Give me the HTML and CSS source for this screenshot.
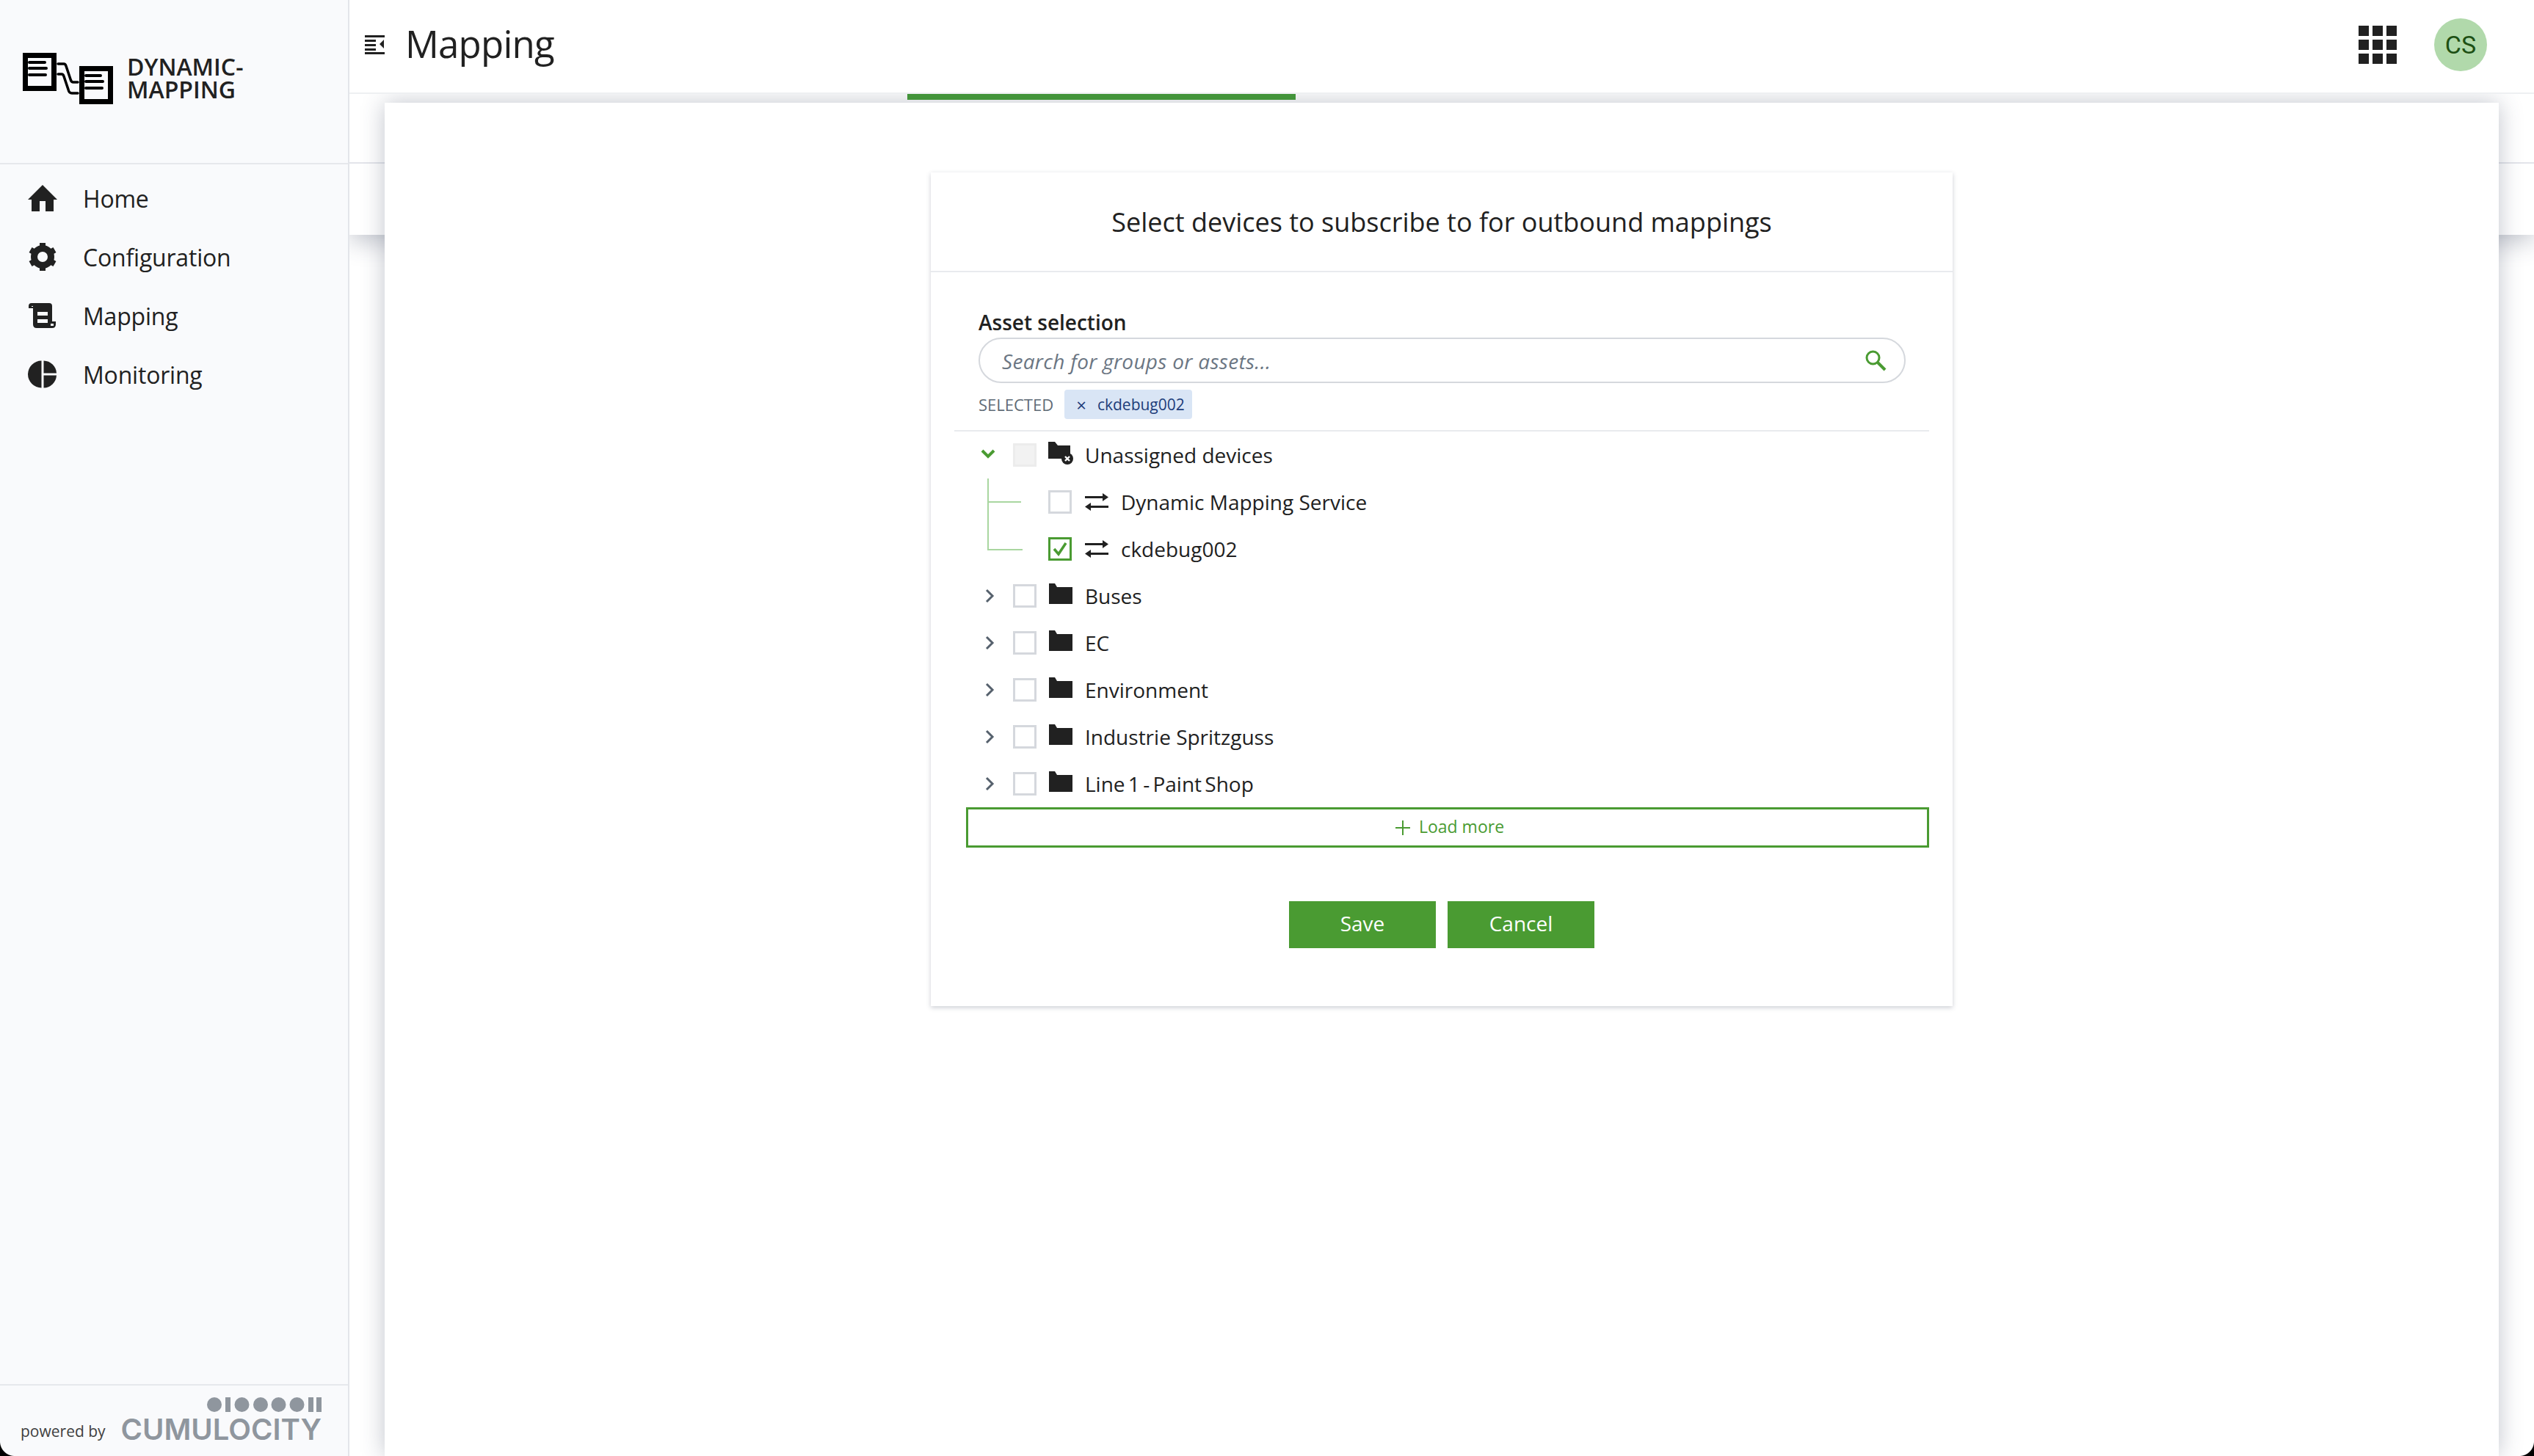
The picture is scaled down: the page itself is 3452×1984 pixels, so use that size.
FILE: index.html
```html
<!DOCTYPE html>
<html lang="en">
<head>
    <meta charset="UTF-8">
    <title>Mapping</title>
    <link rel="stylesheet" href="styles.css">
</head>
<body>
    <div class="app">
        <aside class="sidebar">
            <div class="brand">
                <svg class="brand-logo" viewBox="0 0 123 70" width="123" height="70">
                    <path fill-rule="evenodd" d="M0 0H46V52H0ZM7 7V45H39V7Z"/>
                    <path fill-rule="evenodd" d="M77 18H123V70H77ZM84 25V63H116V25Z"/>
                    <path class="logo-line" d="M9 13H30M9 21H32M9 30H31M86 31H106M86 39H109M86 48H108"/>
                    <path class="logo-line thin" d="M48 15H56Q58 15 59 18L65 36Q66 40 69 40H75M48 29H53Q55 29 56 32L62 50Q63 55 67 55H75"/>
                </svg>
                <div class="brand-name">DYNAMIC-<br>MAPPING</div>
            </div>
            <nav class="nav">
                <a class="nav-item">
                    <svg class="nav-icon" viewBox="0 0 40 40"><path d="M20 2L40 22H35V38H24V24H16V38H5V22H0Z"/></svg>
                    Home
                </a>
                <a class="nav-item">
                    <svg class="nav-icon" viewBox="0 0 40 40">
                        <circle cx="20" cy="20" r="11.5" fill="none" stroke="#212121" stroke-width="9"/>
                        <g>
                            <rect x="16" y="1" width="8" height="8"/>
                            <rect x="16" y="31" width="8" height="8"/>
                            <rect x="16" y="1" width="8" height="8" transform="rotate(60 20 20)"/>
                            <rect x="16" y="31" width="8" height="8" transform="rotate(60 20 20)"/>
                            <rect x="16" y="1" width="8" height="8" transform="rotate(120 20 20)"/>
                            <rect x="16" y="31" width="8" height="8" transform="rotate(120 20 20)"/>
                        </g>
                    </svg>
                    Configuration
                </a>
                <a class="nav-item">
                    <svg class="nav-icon" viewBox="0 0 40 40">
                        <path fill-rule="evenodd" d="M5 3H29Q33 3 33 7V28H38V32Q38 37 33 37H12Q7 37 7 32V10H1V7Q1 3 5 3ZM13 15V20H27V15ZM13 25V30H27V25ZM31 31V34H35V31ZM5 7V8H7V7Z"/>
                    </svg>
                    Mapping
                </a>
                <a class="nav-item">
                    <svg class="nav-icon" viewBox="0 0 40 40">
                        <path d="M18.5 1.5V38.5A18.5 18.5 0 0 1 18.5 1.5Z"/>
                        <path d="M21.5 1.5A18 18 0 0 1 39 18.5H21.5Z"/>
                        <path d="M21.5 21.5H39A18 18 0 0 1 21.5 38.5Z"/>
                    </svg>
                    Monitoring
                </a>
            </nav>
            <div class="powered">
                <span class="powered-by">powered by</span>
                <div class="c8y">
                    <svg class="c8y-dots" viewBox="0 0 156 20" width="156" height="20">
                        <circle cx="10" cy="10" r="10"/><rect x="25" y="0" width="7" height="20"/>
                        <circle cx="47.5" cy="10" r="10"/><circle cx="73" cy="10" r="10"/>
                        <circle cx="97.5" cy="10" r="10"/><circle cx="122.5" cy="10" r="10"/>
                        <rect x="138" y="0" width="7" height="20"/><rect x="149" y="0" width="7" height="20"/>
                    </svg>
                    <div class="c8y-name">CUMULOCITY</div>
                </div>
            </div>
        </aside>

        <main class="main">
            <header class="topbar">
                <svg class="toggle" viewBox="0 0 28 28" width="28" height="28">
                    <path d="M1 2H28V5H1ZM1 8H16V11H1ZM1 14H16V17H1ZM1 20H16V23H1ZM1 25H28V28H1ZM27 8V20L21 14Z"/>
                </svg>
                <h1 class="page-title">Mapping</h1>
                <div class="topbar-right">
                    <div class="app-grid">
                        <i></i><i></i><i></i><i></i><i></i><i></i><i></i><i></i><i></i>
                    </div>
                    <div class="avatar">CS</div>
                </div>
            </header>
            <div class="tabstrip">
                <div class="tabstrip-top"></div>
                <div class="tabstrip-bottom"></div>
            </div>
            <div class="progress"></div>

            <div class="modal">
                <div class="card">
                    <h2 class="card-title">Select devices to subscribe to for outbound mappings</h2>
                    <div class="card-body">
                        <div class="search-block">
                            <label class="field-label">Asset selection</label>
                            <div class="search">
                                <span class="search-text">Search for groups or assets...</span>
                                <svg class="search-icon" viewBox="0 0 30 30" width="30" height="30">
                                    <circle cx="11.5" cy="11.5" r="8.5" fill="none" stroke="#4a9b32" stroke-width="3"/>
                                    <path d="M18 18L28 28" stroke="#4a9b32" stroke-width="4"/>
                                </svg>
                            </div>
                            <div class="selected">
                                <span class="selected-label">SELECTED</span>
                                <span class="tag"><span class="tag-x">&times;</span>ckdebug002</span>
                            </div>
                        </div>

                        <div class="tree">
                            <div class="row">
                                <svg class="chev open" viewBox="0 0 20 14" width="20" height="14"><path d="M2 3L10 11L18 3"/></svg>
                                <span class="check disabled"></span>
                                <svg class="folder" viewBox="0 0 34 32" width="34" height="32">
                                    <path d="M0 1H9L13 6H30V20A11 11 0 0 0 19 24H0Z"/>
                                    <circle cx="26" cy="24" r="8"/>
                                    <path d="M23 21L29 27M29 21L23 27" stroke="#fff" stroke-width="2.4"/>
                                </svg>
                                <span class="row-text">Unassigned devices</span>
                            </div>
                            <div class="children">
                                <div class="row child">
                                    <span class="check"></span>
                                    <svg class="swap" viewBox="0 0 32 30" width="32" height="30"><path d="M0 7H24V3L32 8.5L24 14V10H0ZM32 20H8V16L0 21.5L8 27V23H32Z"/></svg>
                                    <span class="row-text">Dynamic Mapping Service</span>
                                </div>
                                <div class="row child">
                                    <span class="check checked">
                                        <svg viewBox="0 0 24 24" width="24" height="24"><path d="M4 12L10 19L20 4" fill="none" stroke="#4a9b32" stroke-width="3.5"/></svg>
                                    </span>
                                    <svg class="swap" viewBox="0 0 32 30" width="32" height="30"><path d="M0 7H24V3L32 8.5L24 14V10H0ZM32 20H8V16L0 21.5L8 27V23H32Z"/></svg>
                                    <span class="row-text">ckdebug002</span>
                                </div>
                            </div>
                            <div class="row">
                                <svg class="chev" viewBox="0 0 14 20" width="14" height="20"><path d="M3 2L11 10L3 18"/></svg>
                                <span class="check"></span>
                                <svg class="folder" viewBox="0 0 34 32" width="34" height="32"><path d="M1 2H9L12 7H33V30H1Z"/></svg>
                                <span class="row-text">Buses</span>
                            </div>
                            <div class="row">
                                <svg class="chev" viewBox="0 0 14 20" width="14" height="20"><path d="M3 2L11 10L3 18"/></svg>
                                <span class="check"></span>
                                <svg class="folder" viewBox="0 0 34 32" width="34" height="32"><path d="M1 2H9L12 7H33V30H1Z"/></svg>
                                <span class="row-text">EC</span>
                            </div>
                            <div class="row">
                                <svg class="chev" viewBox="0 0 14 20" width="14" height="20"><path d="M3 2L11 10L3 18"/></svg>
                                <span class="check"></span>
                                <svg class="folder" viewBox="0 0 34 32" width="34" height="32"><path d="M1 2H9L12 7H33V30H1Z"/></svg>
                                <span class="row-text">Environment</span>
                            </div>
                            <div class="row">
                                <svg class="chev" viewBox="0 0 14 20" width="14" height="20"><path d="M3 2L11 10L3 18"/></svg>
                                <span class="check"></span>
                                <svg class="folder" viewBox="0 0 34 32" width="34" height="32"><path d="M1 2H9L12 7H33V30H1Z"/></svg>
                                <span class="row-text">Industrie Spritzguss</span>
                            </div>
                            <div class="row">
                                <svg class="chev" viewBox="0 0 14 20" width="14" height="20"><path d="M3 2L11 10L3 18"/></svg>
                                <span class="check"></span>
                                <svg class="folder" viewBox="0 0 34 32" width="34" height="32"><path d="M1 2H9L12 7H33V30H1Z"/></svg>
                                <span class="row-text tight">Line 1 - Paint Shop</span>
                            </div>
                        </div>

                        <button class="load-more">
                            <svg viewBox="0 0 20 20" width="20" height="20"><path d="M10 0V20M0 10H20" stroke="#4a9b32" stroke-width="2"/></svg>
                            <span>Load more</span>
                        </button>
                        <div class="actions">
                            <button class="btn">Save</button>
                            <button class="btn">Cancel</button>
                        </div>
                    </div>
                </div>
            </div>
        </main>
    </div>
</body>
</html>
```

FILE: styles.css
```css
* {
    box-sizing: border-box;
}
html, body {
    height: 100%;
    margin: 0;
}
body {
    font-family: 'Open Sans', sans-serif;
    color: #212121;
    background: #fff;
    overflow: hidden;
}
.app {
    display: flex;
    height: 100%;
}

/* the window's rounded corners show at the bottom */
body::before,
body::after {
    content: "";
    position: fixed;
    z-index: 9;
    bottom: 0;
    width: 20px;
    height: 20px;
}
body::before {
    left: 0;
    background: radial-gradient(circle at 100% 0, transparent 19.5px, #000 20.5px);
}
body::after {
    right: 0;
    background: radial-gradient(circle at 0 0, transparent 19.5px, #000 20.5px);
}

/* sidebar */
.sidebar {
    width: 476px;
    flex: none;
    display: flex;
    flex-direction: column;
    background: #f9fafc;
    border-right: 2px solid #e3e5ea;
}
.brand {
    height: 224px;
    padding: 72px 0 0 31px;
    display: flex;
    align-items: flex-start;
    gap: 19px;
    border-bottom: 2px solid #e6e8ec;
}
.brand-logo {
    flex: none;
}
.logo-line {
    fill: none;
    stroke: #000;
    stroke-width: 4;
    stroke-linecap: round;
}
.logo-line.thin {
    stroke-width: 3.5;
}
.brand-name {
    font-size: 32px;
    font-weight: 600;
    line-height: 31px;
    padding-top: 3px;
}
.nav {
    flex: 1;
    padding-top: 6px;
}
.nav-item {
    height: 80px;
    display: flex;
    align-items: center;
    padding-left: 38px;
    gap: 35px;
    font-size: 32px;
    letter-spacing: -0.2px;
}
.nav-icon {
    width: 40px;
    height: 40px;
    fill: #212121;
}
.powered {
    height: 98px;
    border-top: 2px solid #e6e8ec;
    display: flex;
    align-items: flex-end;
    justify-content: space-between;
    padding: 0 36px 20px 28px;
}
.powered-by {
    font-size: 21px;
    color: #3f3f3f;
}
.c8y {
    display: flex;
    flex-direction: column;
    align-items: flex-end;
    gap: 8px;
}
.c8y-dots {
    fill: #8f969e;
}
.c8y-name {
    font-family: 'Inter', sans-serif;
    font-weight: 600;
    font-size: 40px;
    line-height: 32px;
    color: #8f969e;
}

/* header + tabs */
.main {
    flex: 1;
    position: relative;
    overflow: hidden;
}
.topbar {
    height: 128px;
    position: relative;
    z-index: 3;
    background: #fff;
    border-bottom: 2px solid #eef0f2;
    display: flex;
    align-items: center;
    padding: 0 64px 0 20px;
}
.toggle {
    fill: #212121;
    margin-bottom: 6px;
}
.page-title {
    margin: 0 0 0 28px;
    font-size: 51px;
    font-weight: 400;
    letter-spacing: -0.8px;
    line-height: 1;
    padding-bottom: 8px;
}
.topbar-right {
    margin-left: auto;
    display: flex;
    align-items: center;
    gap: 51px;
    padding-bottom: 4px;
}
.app-grid {
    display: grid;
    grid-template-columns: repeat(3, 14px);
    grid-auto-rows: 14px;
    gap: 5px;
}
.app-grid i {
    background: #212121;
}
.avatar {
    width: 72px;
    height: 72px;
    border-radius: 50%;
    background: #b1d9ab;
    color: #1d5014;
    font-family: 'Roboto', sans-serif;
    font-size: 34px;
    display: flex;
    align-items: center;
    justify-content: center;
}
.tabstrip {
    height: 192px;
    background: #fff;
    box-shadow: 0 10px 30px rgba(50, 60, 85, 0.28);
}
.tabstrip-top {
    height: 95px;
    border-bottom: 2px solid #e3e5ea;
}
.progress {
    position: absolute;
    z-index: 4;
    top: 128px;
    left: 760px;
    width: 529px;
    height: 8px;
    background: #43943a;
}

/* modal */
.modal {
    position: absolute;
    z-index: 2;
    top: 140px;
    left: 48px;
    right: 48px;
    bottom: 0;
    background: #fff;
    box-shadow: 0 0 30px rgba(50, 60, 85, 0.3);
    padding-top: 95px;
}
.card {
    width: 1392px;
    height: 1136px;
    margin: 0 auto;
    background: #fff;
    box-shadow: 0 2px 6px rgba(50, 60, 85, 0.25);
}
.card-title {
    margin: 0;
    height: 136px;
    font-size: 36px;
    font-weight: 400;
    line-height: 136px;
    text-align: center;
    border-bottom: 2px solid #e9ebee;
}
.card-body {
    padding: 0 32px;
}
.search-block {
    padding: 50px 32px 15px 33px;
    border-bottom: 2px solid #e9ebee;
}
.field-label {
    display: block;
    font-size: 28px;
    font-weight: 600;
    line-height: 36px;
    margin-bottom: 3px;
}
.search {
    height: 62px;
    border: 2px solid #d5d8dd;
    border-radius: 31px;
    display: flex;
    align-items: center;
    justify-content: space-between;
    padding: 0 24px 0 30px;
}
.search-text {
    font-size: 28px;
    font-style: italic;
    letter-spacing: 0.3px;
    color: #6b7683;
    padding-top: 2px;
}
.selected {
    display: flex;
    align-items: center;
    gap: 15px;
    margin-top: 9px;
}
.selected-label {
    font-size: 22px;
    color: #5f6b76;
}
.tag {
    height: 40px;
    padding: 0 10px 0 16px;
    display: flex;
    align-items: center;
    background: #d9e5f5;
    border-radius: 4px;
    font-size: 21px;
    color: #1d3d7a;
}
.tag-x {
    margin-right: 15px;
    font-size: 24px;
}

/* tree */
.row {
    height: 64px;
    display: flex;
    align-items: center;
    padding-left: 36px;
}
.row-text {
    font-size: 28px;
    padding-bottom: 1px;
}
.row-text.tight {
    word-spacing: -3px;
}
.chev {
    flex: none;
    width: 20px;
    margin-right: 24px;
    fill: none;
    stroke: #56616d;
    stroke-width: 3;
    transform: translateX(2px);
}
.chev.open {
    stroke: #4a9b32;
    stroke-width: 4;
    margin-bottom: 4px;
    transform: none;
}
.check {
    flex: none;
    width: 32px;
    height: 32px;
    border: 3px solid #d5d8dd;
    background: #fff;
    display: flex;
    align-items: center;
    justify-content: center;
}
.check.disabled {
    background: #f2f2f2;
    border-color: #ececec;
}
.check.checked {
    border-color: #4a9b32;
}
.folder {
    flex: none;
    margin: 0 16px 6px 16px;
    fill: #212121;
}
.children {
    position: relative;
}
.children::before {
    content: "";
    position: absolute;
    left: 45px;
    top: 0;
    width: 46px;
    height: 96px;
    border-left: 2px solid #a9d6a0;
    border-bottom: 2px solid #a9d6a0;
}
.children::after {
    content: "";
    position: absolute;
    left: 45px;
    top: 31px;
    width: 46px;
    border-top: 2px solid #a9d6a0;
}
.child {
    padding-left: 128px;
}
.swap {
    flex: none;
    margin: 0 17px 0 18px;
    fill: #212121;
}
.load-more {
    display: flex;
    align-items: center;
    justify-content: center;
    gap: 12px;
    width: 1312px;
    height: 55px;
    margin-left: 16px;
    padding: 0 0 0 6px;
    background: #fff;
    border: 3px solid #4a9b32;
    font-family: inherit;
    font-size: 23px;
    color: #4a9b32;
}
.load-more span {
    padding-bottom: 4px;
}
.actions {
    display: flex;
    justify-content: center;
    gap: 16px;
    margin-top: 73px;
}
.btn {
    width: 200px;
    height: 64px;
    padding: 0 0 5px;
    background: #4a9b32;
    color: #fff;
    border: 0;
    font-family: inherit;
    font-size: 28px;
}
```
